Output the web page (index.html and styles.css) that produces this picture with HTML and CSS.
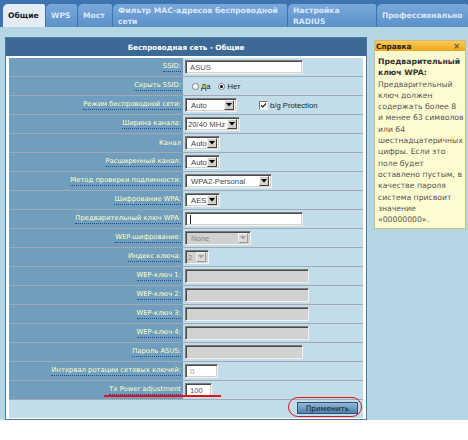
FILE: index.html
```html
<!DOCTYPE html>
<html lang="ru">
<head>
<meta charset="utf-8">
<title>Беспроводная сеть - Общие</title>
<link rel="stylesheet" href="styles.css">
</head>
<body>
<div class="tabbar">
  <div class="tab active w-gen">Общие</div>
  <div class="tab w-wps">WPS</div>
  <div class="tab w-most">Мост</div>
  <div class="tab w-mac">Фильтр MAC-адресов беспроводной<br>сети</div>
  <div class="tab w-rad">Настройка<br>RADIUS</div>
  <div class="tab w-pro">Профессионально</div>
</div>
<div class="content">
  <div class="panel">
    <div class="phead">Беспроводная сеть - Общие</div>
    <div class="pbody">
      <div class="row"><div class="lbl"><span class="u">SSID:</span></div><div class="val"><span class="inp w118">ASUS</span></div></div>
      <div class="row"><div class="lbl"><span class="u">Скрыть SSID:</span></div><div class="val radios"><span class="radio"></span><span class="rtxt">Да</span><span class="radio on"></span><span class="rtxt">Нет</span></div></div>
      <div class="row"><div class="lbl"><span class="u">Режим беспроводной сети:</span></div><div class="val"><span class="sel w52"><span class="t">Auto</span><span class="arr"><svg width="6" height="4" viewBox="0 0 6 4"><path d="M0 0h6L3 3.5z" fill="#000"/></svg></span></span><span class="cbx"><svg width="8" height="8" viewBox="0 0 8 8"><path d="M1 3.5l2 2L7 1.5v1.6L3 7.1 1 5.1z" fill="#000"/></svg></span><span class="ctxt">b/g Protection</span></div></div>
      <div class="row"><div class="lbl"><span class="u">Ширина канала:</span></div><div class="val"><span class="sel w55"><span class="t t1">20/40 MHz</span><span class="arr"><svg width="6" height="4" viewBox="0 0 6 4"><path d="M0 0h6L3 3.5z" fill="#000"/></svg></span></span></div></div>
      <div class="row"><div class="lbl"><span>Канал</span></div><div class="val"><span class="sel w35"><span class="t">Auto</span><span class="arr"><svg width="6" height="4" viewBox="0 0 6 4"><path d="M0 0h6L3 3.5z" fill="#000"/></svg></span></span></div></div>
      <div class="row"><div class="lbl"><span class="u">Расширенный канал:</span></div><div class="val"><span class="sel w35"><span class="t">Auto</span><span class="arr"><svg width="6" height="4" viewBox="0 0 6 4"><path d="M0 0h6L3 3.5z" fill="#000"/></svg></span></span></div></div>
      <div class="row"><div class="lbl"><span class="u">Метод проверки подлинности:</span></div><div class="val"><span class="sel w87"><span class="t">WPA2-Personal</span><span class="arr"><svg width="6" height="4" viewBox="0 0 6 4"><path d="M0 0h6L3 3.5z" fill="#000"/></svg></span></span></div></div>
      <div class="row"><div class="lbl"><span class="u">Шифрование WPA:</span></div><div class="val"><span class="sel w35"><span class="t">AES</span><span class="arr"><svg width="6" height="4" viewBox="0 0 6 4"><path d="M0 0h6L3 3.5z" fill="#000"/></svg></span></span></div></div>
      <div class="row"><div class="lbl"><span class="u">Предварительный ключ WPA:</span></div><div class="val"><span class="inp w118"><span class="caret"></span></span></div></div>
      <div class="row"><div class="lbl"><span class="u">WEP-шифрование:</span></div><div class="val"><span class="sel dis w66"><span class="t">None</span><span class="arr"><svg width="6" height="4" viewBox="0 0 6 4"><path d="M0 0h6L3 3.5z" fill="#a0a0a0"/></svg></span></span></div></div>
      <div class="row"><div class="lbl"><span class="u">Индекс ключа:</span></div><div class="val"><span class="sel dis w24"><span class="t t1">2</span><span class="arr"><svg width="6" height="4" viewBox="0 0 6 4"><path d="M0 0h6L3 3.5z" fill="#a0a0a0"/></svg></span></span></div></div>
      <div class="row"><div class="lbl"><span class="u">WEP-ключ 1:</span></div><div class="val"><span class="inp dis w124"></span></div></div>
      <div class="row"><div class="lbl"><span class="u">WEP-ключ 2:</span></div><div class="val"><span class="inp dis w124"></span></div></div>
      <div class="row"><div class="lbl"><span class="u">WEP-ключ 3:</span></div><div class="val"><span class="inp dis w124"></span></div></div>
      <div class="row"><div class="lbl"><span class="u">WEP-ключ 4:</span></div><div class="val"><span class="inp dis w124"></span></div></div>
      <div class="row"><div class="lbl"><span class="u">Пароль ASUS:</span></div><div class="val"><span class="inp dis w118"></span></div></div>
      <div class="row"><div class="lbl"><span class="u">Интервал ротации сетевых ключей:</span></div><div class="val"><span class="inp w33 light">0</span></div></div>
      <div class="row tx"><div class="lbl"><span class="u">Tx Power adjustment</span></div><div class="val"><span class="inp w27">100</span></div><span class="redline"></span></div>
      <div class="btnrow"><button class="apply">Применить</button><span class="oval"></span></div>
    </div>
  </div>
  <div class="help">
    <div class="hhead"><span>Справка</span><span class="x">×</span></div>
    <div class="hbody"><b>Предварительный<br>ключ WPA:</b><br>Предварительный<br>ключ должен<br>содержать более 8<br>и менее 63 символов<br>или 64<br>шестнадцатеричных<br>цифры. Если это<br>поле будет<br>оставлено пустым, в<br>качестве пароля<br>система присвоит<br>значение<br>«00000000».</div>
  </div>
</div>
</body>
</html>
```
FILE: styles.css
```css
* { box-sizing: border-box; margin: 0; padding: 0; }
body {
  width: 468px; height: 440px; overflow: hidden;
  background: #fff;
  font-family: "DejaVu Sans", Verdana, sans-serif;
  font-size: 7.7px;
}
.tabbar {
  height: 27px; background: #3d74b0;
  display: flex; align-items: flex-end; gap: 1px; padding-left: 3px;
}
.tab {
  height: 23px; padding-left: 5px;
  display: flex; align-items: center;
  background: linear-gradient(#78a9dc, #5c90c9);
  color: #dbe7f4; font-weight: bold; font-size: 7.6px; line-height: 11px;
  border-radius: 5px 2px 0 0;
  white-space: nowrap;
}
.tab.active { background: #e4edf5; color: #1b1b1b; }
.w-gen { width: 42px; }
.w-wps { width: 31px; }
.w-most { width: 34px; }
.w-mac { width: 174px; }
.w-rad { width: 88px; }
.w-pro { flex: 1; }

.content {
  height: 393px; background: #b5d6e5;
  display: flex; align-items: flex-start; padding-left: 5px;
}
.panel { width: 362px; margin-top: 10px; border: 1px solid #4e79a3; background: #fff; }
.phead {
  height: 18px; background: #3c6a95; color: #fff;
  font-weight: bold; font-size: 7.2px;
  display: flex; align-items: center; justify-content: center;
}
.pbody { padding: 2px 3px 1px 3px; }
.row {
  position: relative;
  display: grid; grid-template-columns: 174px 1fr;
  height: 19px; border-bottom: 1px solid #a0aab2;
}
.lbl {
  background: #6f9ebe;
  display: flex; align-items: center; justify-content: flex-end;
  padding-right: 2px;
  font-family: "DejaVu Sans", Verdana, sans-serif; font-size: 6.8px;
  color: #ffffc4; white-space: nowrap;
}
.u { border-bottom: 1px dotted #1d4f96; line-height: 9px; }
.val {
  background: #c2dde9;
  display: flex; align-items: center; padding-left: 2px;
  font-family: "Liberation Sans", Arial, sans-serif; font-size: 7.7px;
}
.inp, .sel {
  height: 14px; display: inline-flex; align-items: center;
  border: 1px solid; border-color: #7c7c7c #f2f2f2 #f2f2f2 #7c7c7c;
  box-shadow: inset 1px 1px 0 #4a4a4a, inset -1px -1px 0 #d4d0c8;
  background: #fff; color: #555;
  padding-left: 4px;
}
.inp.dis { background: #d2d2d2; }
.inp.light { color: #999; }
.caret { width: 1px; height: 9px; background: #222; }
.sel { padding: 2px 2px 2px 0; }
.sel .t { flex: 1; padding-left: 5px; color: #444; }
.sel .t.t1 { padding-left: 2px; }
.sel .arr {
  width: 10px; height: 10px; background: #d4d0c8;
  border: 1px solid; border-color: #f4f4f4 #404040 #404040 #f4f4f4;
  display: flex; align-items: center; justify-content: center;
}
.sel.dis { background: #d0d0d0; }
.sel.dis .t { color: #888; }
.sel.dis .arr { background: #dcdcdc; border-color: #f4f4f4 #9a9a9a #9a9a9a #f4f4f4; }
.w24 { width: 24px; } .w27 { width: 27px; } .w33 { width: 33px; } .w35 { width: 35px; }
.w52 { width: 52px; } .w55 { width: 55px; } .w66 { width: 66px; } .w87 { width: 87px; }
.w118 { width: 118px; } .w124 { width: 124px; }

.radios { padding-left: 9px; }
.radio {
  width: 7px; height: 7px; border-radius: 50%;
  background: #fff; border: 1px solid #7c7c7c;
  display: inline-flex; align-items: center; justify-content: center;
}
.radio.on::after { content: ""; width: 3px; height: 3px; border-radius: 50%; background: #000; }
.rtxt { margin: 0 8px 0 2px; color: #222; }
.cbx {
  width: 9px; height: 9px; margin-left: 22px; background: #fff;
  border: 1px solid; border-color: #7c7c7c #eee #eee #7c7c7c;
  display: inline-flex; align-items: center; justify-content: center;
}
.ctxt { margin-left: 2px; color: #222; }

.redline {
  position: absolute; left: 95px; top: 14px; width: 117px; height: 2px; background: #e2101a;
}
.btnrow {
  position: relative; height: 18px; background: #c2dde9;
  display: flex; justify-content: flex-end; align-items: flex-start;
  padding: 2px 5px 0 0;
}
.apply {
  width: 61px; height: 12px;
  background: linear-gradient(#92b8d8, #4f80ad);
  border: 1px solid #2f5274; color: #0f1e30;
  font-family: "DejaVu Sans", Verdana, sans-serif; font-size: 7.4px;
}
.oval {
  position: absolute; left: 279px; top: -3px; width: 74px; height: 20px;
  border: 1.5px solid #e2101a; border-radius: 10px;
}

.help {
  width: 92px; margin: 13px 0 0 7px;
  border: 1px solid #c9bd82; background: #fdfbd0;
}
.hhead {
  height: 10px; background: linear-gradient(#fbca55, #eea51d);
  display: flex; justify-content: space-between; align-items: center;
  padding: 0 5px 0 1px;
  font-weight: bold; font-size: 7.4px; color: #222;
}
.hhead .x { color: #6a5a30; font-size: 8px; }
.hbody { padding: 5px 2px 3px 3px; line-height: 11.3px; color: #555; font-size: 7.7px; white-space: nowrap; }
.hbody b { color: #333; }
```
